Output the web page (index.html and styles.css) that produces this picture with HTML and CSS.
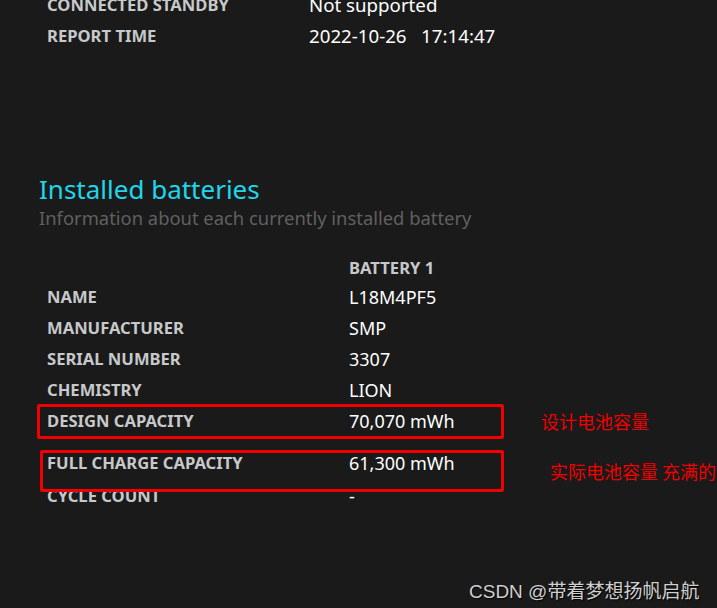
FILE: index.html
```html
<!DOCTYPE html>
<html lang="en">
<head>
    <meta charset="UTF-8">
    <meta name="viewport" content="width=device-width, initial-scale=1.0">
    <title>Battery report</title>
    <link rel="stylesheet" href="styles.css">
</head>
<body>
    <table class="summary">
        <tr><td class="label">CONNECTED STANDBY</td><td class="value">Not supported</td></tr>
        <tr><td class="label">REPORT TIME</td><td class="value">2022-10-26&nbsp;&nbsp;&nbsp;17:14:47</td></tr>
    </table>

    <div class="section">
        <h2 class="title">Installed batteries</h2>
        <div class="subtitle">Information about each currently installed battery</div>

        <div class="battery">
            <table class="battery-table">
                <tr class="head"><td class="label"></td><td class="col">BATTERY 1</td></tr>
                <tr><td class="label">NAME</td><td class="value">L18M4PF5</td></tr>
                <tr><td class="label">MANUFACTURER</td><td class="value">SMP</td></tr>
                <tr><td class="label">SERIAL NUMBER</td><td class="value">3307</td></tr>
                <tr><td class="label">CHEMISTRY</td><td class="value">LION</td></tr>
                <tr><td class="label">DESIGN CAPACITY</td><td class="value">70,070 mWh</td></tr>
                <tr class="gap"><td class="label">FULL CHARGE CAPACITY</td><td class="value">61,300 mWh</td></tr>
                <tr><td class="label">CYCLE COUNT</td><td class="value">-</td></tr>
            </table>

            <div class="mark mark-design"></div>
            <div class="mark mark-full"></div>
            <div class="note note-design">设计电池容量</div>
            <div class="note note-full">实际电池容量 充满的时候</div>
        </div>
    </div>

    <div class="watermark">CSDN @带着梦想扬帆启航</div>
</body>
</html>
```

FILE: styles.css
```css
body {
    margin: 0;
    background: #1a1a1a;
    font-family: "Noto Sans", "Open Sans", sans-serif;
    color: #ffffff;
    height: 608px;
    overflow: hidden;
    position: relative;
}

table {
    border-collapse: collapse;
}

td {
    padding: 0;
    height: 31px;
    vertical-align: middle;
}

.label {
    font-size: 16.6px;
    font-weight: bold;
    color: #c6c8ca;
    padding-left: 47px;
}

.value {
    font-size: 18px;
    color: #ffffff;
}

.summary {
    margin-top: -11px;
}

.summary .label {
    width: 309px;
    box-sizing: border-box;
}

.summary .value {
    font-size: 18.7px;
}

.section {
    margin-top: 122px;
}

.title {
    margin: 0 0 0 39px;
    font-size: 26px;
    font-weight: normal;
    color: #1fd6ea;
    line-height: 32px;
}

.subtitle {
    margin-left: 39px;
    font-size: 18.4px;
    color: #606060;
    line-height: 26px;
}

.battery {
    position: relative;
    margin-top: 22px;
}

.battery-table .label {
    width: 349px;
    box-sizing: border-box;
}

.battery-table .col {
    font-size: 16.6px;
    font-weight: bold;
    color: #c6c8ca;
}

.battery-table .head td {
    height: 28px;
}

.battery-table .gap td {
    height: 27px;
    padding-top: 17px;
    vertical-align: top;
    line-height: 20px;
}

/* annotations drawn over the screenshot */
.mark {
    position: absolute;
    border: 3px solid #f00000;
    border-radius: 2px;
}

.mark-design {
    left: 37px;
    top: 151px;
    width: 461px;
    height: 29px;
}

.mark-full {
    left: 40px;
    top: 197px;
    width: 458px;
    height: 36px;
}

.note {
    position: absolute;
    color: #f00000;
    font-family: "Noto Sans CJK SC", sans-serif;
    font-size: 18px;
    white-space: nowrap;
}

.note-design {
    left: 541px;
    top: 155px;
}

.note-full {
    left: 550px;
    top: 205px;
}

.watermark {
    position: absolute;
    left: 469px;
    top: 576px;
    font-family: "Liberation Sans", "Noto Sans CJK SC", sans-serif;
    font-size: 19px;
    color: #cfcfcf;
    text-shadow: 1px 1px 1px #000000;
    white-space: nowrap;
}
```
